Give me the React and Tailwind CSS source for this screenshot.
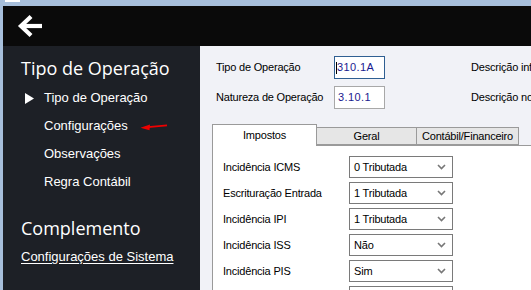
import React from 'react';

const MENU = ['Tipo de Operação', 'Configurações', 'Observações', 'Regra Contábil'];

const ROWS = [
  ['Incidência ICMS', '0 Tributada'],
  ['Escrituração Entrada', '1 Tributada'],
  ['Incidência IPI', '1 Tributada'],
  ['Incidência ISS', 'Não'],
  ['Incidência PIS', 'Sim'],
  ['Incidência COFINS', 'Sim'],
];

const Chevron = () => (
  <svg width="9" height="6" viewBox="0 0 9 6" className="shrink-0">
    <path d="M1 1 L4.5 4.5 L8 1" fill="none" stroke="#777" strokeWidth="1.6" />
  </svg>
);

const Select = ({ value }) => (
  <div className="w-[104px] h-[22px] shrink-0 border border-[#7a7a7a] bg-white flex items-center justify-between pl-[4px] pr-[6px]">
    <span>{value}</span>
    <Chevron />
  </div>
);

export default function App() {
  return (
    <div className="w-[531px] h-[290px] overflow-hidden bg-[#a7bfdb] pl-[3px] pt-[6px] flex flex-col relative font-['Liberation_Sans',sans-serif]">
      <div className="absolute left-[5px] top-0 w-[15px] h-[2px] bg-white" />

      {/* header */}
      <div className="h-[40px] shrink-0 bg-[#0a0a0a] flex items-center pl-[14px]">
        <svg width="26" height="22" viewBox="0 0 26 22">
          <path d="M25 11 H5" stroke="white" strokeWidth="4.2" />
          <path d="M12.5 3 L4 11 L12.5 19" fill="none" stroke="white" strokeWidth="4.2" strokeLinecap="square" />
        </svg>
      </div>

      <div className="flex-1 flex min-h-0">
        {/* sidebar */}
        <div className="w-[197px] shrink-0 bg-[#1d2026] text-white pl-[18px] pt-[10px] relative">
          <div className="text-[18px] leading-[24px] font-['Open_Sans',sans-serif]">Tipo de Operação</div>
          <div className="mt-[4px] text-[13px]">
            {MENU.map((m, i) => (
              <div key={m} className="h-[28px] flex items-center">
                <span className="w-[23px] pl-[4px]">
                  {i === 0 && (
                    <svg width="9" height="11" viewBox="0 0 9 11">
                      <path d="M0 0 L9 5.5 L0 11 Z" fill="white" />
                    </svg>
                  )}
                </span>
                <span>{m}</span>
              </div>
            ))}
          </div>
          <svg className="absolute left-[137px] top-[77px]" width="28" height="8" viewBox="0 0 28 8">
            <path d="M27 2.3 L8 4.2" stroke="#e00" strokeWidth="1.8" />
            <path d="M0.5 4.8 L10 1.5 L9.5 7.2 Z" fill="#e00" />
          </svg>
          <div className="mt-[20px] text-[18px] leading-[24px] font-['Open_Sans',sans-serif]">Complemento</div>
          <div className="mt-[7px] text-[13px] leading-[20px] underline underline-offset-2">Configurações de Sistema</div>
        </div>

        {/* content */}
        <div className="flex-1 bg-[#f1f2f7] pt-[10px] text-[11px] tracking-[-0.2px] text-black min-w-0 overflow-hidden">
          <div className="pl-[16px] flex flex-col gap-[7px]">
            <div className="flex items-center whitespace-nowrap">
              <span className="w-[118px] shrink-0">Tipo de Operação</span>
              <div className="w-[51px] h-[23px] shrink-0 border border-[#2f5f92] bg-white flex items-center pl-[1px] text-[#1a1a90] tracking-[0.4px]">
                <span className="w-px h-[12px] bg-black" />
                310.1A
              </div>
              <span className="ml-[86px] shrink-0">Descrição informal</span>
            </div>
            <div className="flex items-center whitespace-nowrap">
              <span className="w-[118px] shrink-0">Natureza de Operação</span>
              <div className="w-[51px] h-[23px] shrink-0 border border-[#a8a8a8] bg-white flex items-center pl-[3px] text-[#1a1a90] tracking-[0.4px]">
                3.10.1
              </div>
              <span className="ml-[86px] shrink-0">Descrição normal</span>
            </div>
          </div>

          {/* tabs */}
          <div className="mt-[15px] ml-[12px] flex items-end h-[21px] relative">
            <div className="w-[105px] h-[22px] shrink-0 bg-white border border-b-0 border-[#9a9a9a] flex items-start justify-center pt-[2px] relative z-10 -mb-px">
              Impostos
            </div>
            <div className="w-[100px] h-[18px] shrink-0 bg-[#e6e6e6] border border-[#9a9a9a] border-l-0 flex items-center justify-center">
              Geral
            </div>
            <div className="w-[102px] h-[18px] shrink-0 bg-[#e6e6e6] border border-[#9a9a9a] border-l-0 flex items-center justify-center whitespace-nowrap">
              Contábil/Financeiro
            </div>
          </div>
          <div className="ml-[12px] h-full bg-white border-l border-t border-[#9a9a9a] pl-[10px] pt-[10px] flex flex-col gap-[4px]">
            {ROWS.map(([l, v]) => (
              <div key={l} className="flex items-center whitespace-nowrap">
                <span className="w-[126px] shrink-0">{l}</span>
                <Select value={v} />
              </div>
            ))}
          </div>
        </div>
      </div>
    </div>
  );
}
